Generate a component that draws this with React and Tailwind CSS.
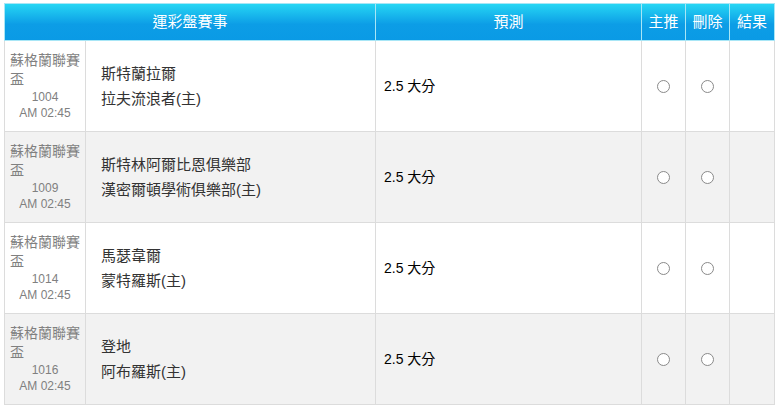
const ROWS = [
  { no: '1004', home: '斯特蘭拉爾', away: '拉夫流浪者(主)' },
  { no: '1009', home: '斯特林阿爾比恩俱樂部', away: '漢密爾頓學術俱樂部(主)' },
  { no: '1014', home: '馬瑟韋爾', away: '蒙特羅斯(主)' },
  { no: '1016', home: '登地', away: '阿布羅斯(主)' },
];

const FONT = { fontFamily: '"Liberation Sans", "Noto Sans CJK TC", sans-serif' };

function Radio() {
  return <span className="inline-block w-[13px] h-[13px] rounded-full border border-[#8a8a8a] bg-white align-middle" />;
}

export default function App() {
  return (
    <div className="w-[784px] h-[410px] bg-white pt-[3px] pl-[4px]" style={FONT}>
      <table className="w-[770px] border-collapse table-fixed">
        <colgroup>
          <col className="w-[81px]" />
          <col className="w-[290px]" />
          <col className="w-[266px]" />
          <col className="w-[44px]" />
          <col className="w-[44px]" />
          <col className="w-[45px]" />
        </colgroup>
        <thead>
          <tr className="h-[37px] text-white text-[15px] bg-[linear-gradient(#26d6f4,#0c9de6_55%,#0a9ae5)]">
            <th colSpan={2} className="border border-[#a8e6f6] font-normal">運彩盤賽事</th>
            <th className="border border-[#a8e6f6] font-normal">預測</th>
            <th className="border border-[#a8e6f6] font-normal">主推</th>
            <th className="border border-[#a8e6f6] font-normal">刪除</th>
            <th className="border border-[#a8e6f6] font-normal">結果</th>
          </tr>
        </thead>
        <tbody>
          {ROWS.map((r, i) => (
            <tr key={r.no} className={i % 2 ? 'h-[91px] bg-[#f2f2f2]' : 'h-[91px] bg-white'}>
              <td className="border border-[#dcdcdc] px-[5px] text-[#808080] align-middle">
                <div className="text-[14px] leading-[19px] text-left">蘇格蘭聯賽盃</div>
                <div className="text-[12px] leading-[16px] text-center">{r.no}</div>
                <div className="text-[12px] leading-[16px] text-center">AM 02:45</div>
              </td>
              <td className="border border-[#dcdcdc] pl-[15px] text-[15px] leading-[25px] text-[#333]">
                <div>{r.home}</div>
                <div>{r.away}</div>
              </td>
              <td className="border border-[#dcdcdc] pl-[8px] text-[14px] text-black">2.5 大分</td>
              <td className="border border-[#dcdcdc] text-center"><Radio /></td>
              <td className="border border-[#dcdcdc] text-center"><Radio /></td>
              <td className="border border-[#dcdcdc]" />
            </tr>
          ))}
        </tbody>
      </table>
    </div>
  );
}
